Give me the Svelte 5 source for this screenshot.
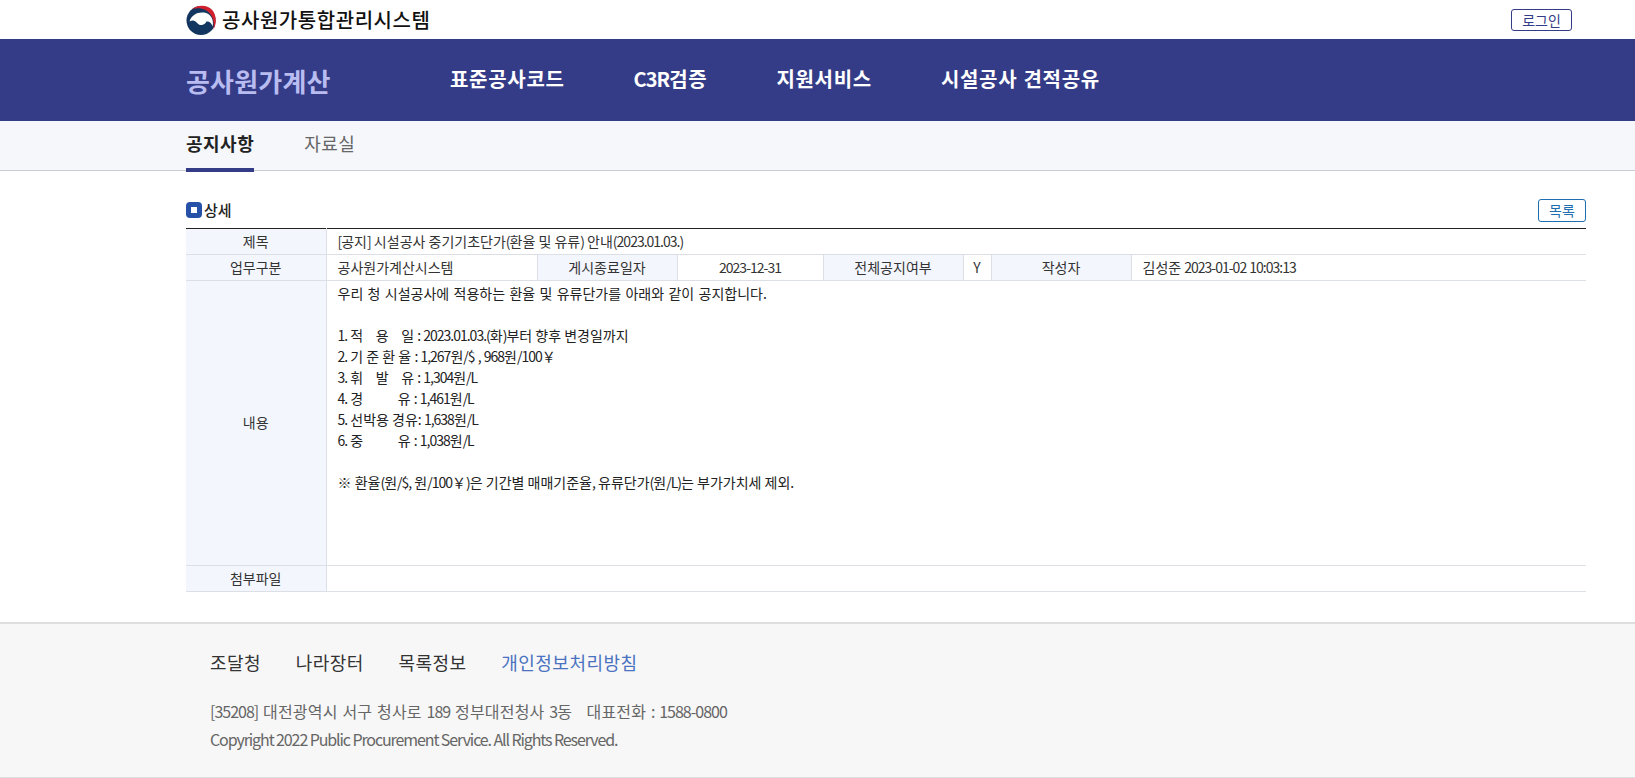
<script lang="ts">
  const menus = ['표준공사코드', 'C3R검증', '지원서비스', '시설공사 견적공유']
  const footerLinks = ['조달청', '나라장터', '목록정보']
  const bodyLines = [
    '우리 청 시설공사에 적용하는 환율 및 유류단가를 아래와 같이 공지합니다.',
    '',
    '1. 적    용    일 : 2023.01.03.(화)부터 향후 변경일까지',
    '2. 기 준 환 율 : 1,267원/$ , 968원/100￥',
    '3. 휘    발    유 : 1,304원/L',
    '4. 경           유 : 1,461원/L',
    '5. 선박용 경유: 1,638원/L',
    '6. 중           유 : 1,038원/L',
    '',
    '※ 환율(원/$, 원/100￥)은 기간별 매매기준율, 유류단가(원/L)는 부가가치세 제외.',
  ]

  // latin runs sit tighter than hangul in the original font
  const runs = (text: string) => text.split(/([\x21-\x7e]+)/).filter(Boolean)
  const isLatin = (s: string) => /^[\x21-\x7e]+$/.test(s)
</script>

{#snippet tx(text: string)}
  {#each runs(text) as r}{#if isLatin(r)}<span class="latin">{r}</span>{:else}{r}{/if}{/each}
{/snippet}

<header class="top">
  <div class="wrap top__inner">
    <div class="brand">
      <svg class="brand__logo" viewBox="0 0 30 30" aria-hidden="true">
        <circle cx="15" cy="15.5" r="14.5" fill="#12365f" />
        <path d="M3.6 16.5C5 10 12 6.6 18 7.6 24.6 8.6 28.2 14.6 26.6 21.5 25.2 17.4 23 16 20.4 16.6 19 20.4 14 21.4 11.4 18.2 9.4 15.4 6.4 14.4 3.6 16.5Z" fill="#fff" />
        <path d="M5.5 4.6C10.6 -.4 21 -.9 26 4.8 30.6 10 31 18.4 27.4 24.6 29 16.4 26 8.6 19.6 5 15 2.8 9.8 2.8 5.5 4.6Z" fill="#d0202e" />
      </svg>
      <span class="brand__name">공사원가통합관리시스템</span>
    </div>
    <button class="btn-login">로그인</button>
  </div>
</header>

<nav class="gnb">
  <div class="wrap gnb__inner">
    <h1 class="gnb__title">공사원가계산</h1>
    <ul class="gnb__menu">
      {#each menus as m}
        <li>{@render tx(m)}</li>
      {/each}
    </ul>
  </div>
</nav>

<div class="tabs">
  <div class="wrap tabs__inner">
    <span class="tab tab--active">공지사항</span>
    <span class="tab">자료실</span>
  </div>
</div>

<main class="wrap content">
  <div class="content__head">
    <h2 class="content__title"><span class="content__mark"></span>상세</h2>
    <button class="btn-list">목록</button>
  </div>

  <table class="detail">
    <colgroup>
      <col style="width:140px" />
      <col style="width:211px" />
      <col style="width:140px" />
      <col style="width:146px" />
      <col style="width:140px" />
      <col style="width:28px" />
      <col style="width:140px" />
      <col />
    </colgroup>
    <tbody>
      <tr>
        <th>제목</th>
        <td colspan="7">{@render tx('[공지] 시설공사 중기기초단가(환율 및 유류) 안내(2023.01.03.)')}</td>
      </tr>
      <tr>
        <th>업무구분</th>
        <td>공사원가계산시스템</td>
        <th>게시종료일자</th>
        <td class="center">{@render tx('2023-12-31')}</td>
        <th>전체공지여부</th>
        <td class="center">Y</td>
        <th>작성자</th>
        <td>{@render tx('김성준 2023-01-02 10:03:13')}</td>
      </tr>
      <tr>
        <th>내용</th>
        <td colspan="7" class="detail__body">
          {#each bodyLines as line}
            <p>{@render tx(line)}</p>
          {/each}
        </td>
      </tr>
      <tr>
        <th>첨부파일</th>
        <td colspan="7"></td>
      </tr>
    </tbody>
  </table>
</main>

<footer class="foot">
  <div class="wrap foot__inner">
    <ul class="foot__links">
      {#each footerLinks as l}
        <li>{l}</li>
      {/each}
      <li class="foot__privacy">개인정보처리방침</li>
    </ul>
    <p class="foot__addr">{@render tx('[35208] 대전광역시 서구 청사로 189 정부대전청사 3동')} &nbsp; {@render tx('대표전화 : 1588-0800')}</p>
    <p class="foot__copy">Copyright 2022 Public Procurement Service. All Rights Reserved.</p>
  </div>
</footer>

<style>
  :global(body) {
    margin: 0;
    background: #fff;
    font-family: 'Noto Sans CJK KR', 'Noto Sans', sans-serif;
    color: #222;
  }

  h1, h2, p, ul {
    margin: 0;
    padding: 0;
  }

  ul {
    list-style: none;
  }

  .wrap {
    width: 1400px;
    margin-left: 186px;
  }

  .latin {
    letter-spacing: -1px;
  }

  .top {
    height: 39px;
  }

  .top__inner {
    display: flex;
    align-items: center;
    justify-content: space-between;
    height: 100%;
  }

  .brand {
    display: flex;
    align-items: center;
    gap: 6px;
  }

  .brand__logo {
    width: 30px;
    height: 30px;
  }

  .brand__name {
    font-size: 20px;
    font-weight: 500;
    letter-spacing: 0.55px;
    color: #111;
  }

  .btn-login {
    width: 61px;
    height: 22px;
    margin-right: 14px;
    padding: 0;
    border: 1px solid #343c88;
    border-radius: 3px;
    background: #fff;
    color: #343c88;
    font: 14px 'Noto Sans CJK KR', sans-serif;
  }

  .gnb {
    height: 82px;
    background: #343c88;
  }

  .gnb__inner {
    display: flex;
    align-items: center;
    height: 100%;
  }

  .gnb__title {
    width: 264px;
    font-size: 26px;
    font-weight: 700;
    letter-spacing: 0.2px;
    color: #b8bcf0;
  }

  .gnb__menu {
    display: flex;
    gap: 69px;
    margin-top: -3px;
    font-size: 20px;
    font-weight: 700;
    letter-spacing: 0.7px;
    word-spacing: 1px;
    color: #fff;
  }

  .tabs {
    height: 49px;
    background: #f5f7fb;
    border-bottom: 1px solid #c9cad6;
  }

  .tabs__inner {
    display: flex;
    gap: 50px;
    height: 100%;
  }

  .tab {
    font-size: 18px;
    letter-spacing: 0.5px;
    line-height: 44px;
    color: #666;
  }

  .tab--active {
    height: 51px;
    box-sizing: border-box;
    font-weight: 700;
    color: #222;
    border-bottom: 4px solid #343c88;
  }

  .content {
    padding-top: 25px;
  }

  .content__head {
    display: flex;
    align-items: center;
    justify-content: space-between;
    height: 28px;
  }

  .content__title {
    display: flex;
    align-items: center;
    gap: 2px;
    font-size: 15px;
    font-weight: 500;
    line-height: 20px;
    color: #222;
  }

  .content__mark {
    display: flex;
    width: 16px;
    height: 16px;
    border-radius: 4px;
    background: #2750a8;
  }

  .content__mark::after {
    content: '';
    width: 6px;
    height: 6px;
    margin: auto;
    background: #fff;
  }

  .btn-list {
    width: 48px;
    height: 23px;
    padding: 0;
    border: 1px solid #1f6fb0;
    border-radius: 3px;
    background: #fff;
    color: #1f6fb0;
    font: 14px 'Noto Sans CJK KR', sans-serif;
  }

  .detail {
    width: 1400px;
    margin-top: 4px;
    table-layout: fixed;
    border-collapse: collapse;
    border-top: 1px solid #222;
    font-size: 14px;
  }

  .detail th,
  .detail td {
    height: 23px;
    padding: 0 0 2px;
    border-bottom: 1px solid #dcdfe6;
    font-weight: 400;
    line-height: 20px;
    color: #333;
  }

  .detail th {
    background: #f3f6fd;
    border-right: 1px solid #dcdfe6;
    border-left: 1px solid #dcdfe6;
    text-align: center;
  }

  .detail tr th:first-child {
    border-left: 0;
  }

  .detail td {
    padding: 0 11px 2px;
  }

  .detail .center {
    padding: 0 0 2px;
    text-align: center;
  }

  .detail .detail__body {
    height: 284px;
    padding-bottom: 0;
    vertical-align: top;
  }

  .detail__body p {
    min-height: 21px;
    line-height: 21px;
    white-space: pre-wrap;
    color: #222;
  }

  .detail__body p:first-child {
    margin-top: 2px;
    word-spacing: 1.2px;
  }

  .foot {
    margin-top: 30px;
    height: 153px;
    background: #f7f7f7;
    border-top: 2px solid #dedede;
    border-bottom: 1px solid #dedede;
  }

  .foot__inner {
    padding: 26px 0 0 24px;
    box-sizing: border-box;
  }

  .foot__links {
    display: flex;
    gap: 34.5px;
    font-size: 18px;
    letter-spacing: 0.5px;
    line-height: 24px;
    color: #333;
  }

  .foot__privacy {
    color: #4a72c0;
  }

  .foot__addr {
    margin-top: 23px;
    font-size: 16px;
    letter-spacing: 0.2px;
    word-spacing: 1px;
    line-height: 28px;
    color: #666;
  }

  .foot__copy {
    font-size: 16px;
    letter-spacing: -1.1px;
    line-height: 29px;
    color: #666;
  }
</style>
